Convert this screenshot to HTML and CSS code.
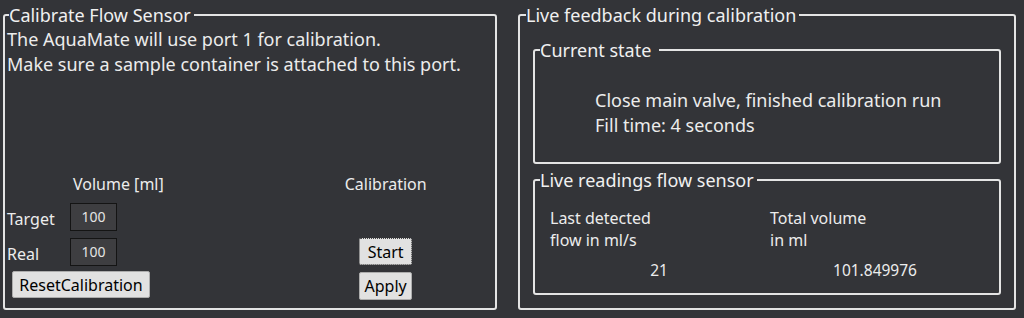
FILE: index.html
```html
<!DOCTYPE html>
<html>
<head>
<meta charset="utf-8">
<link rel="stylesheet" href="styles.css">
</head>
<body>
<div class="main">
  <fieldset class="group left">
    <legend>Calibrate Flow Sensor</legend>
    <p class="intro">The AquaMate will use port 1 for calibration.<br>Make sure a sample container is attached to this port.</p>
    <div class="calib">
      <div class="vol-col">
        <div class="col-head vol-head">Volume [ml]</div>
        <div class="row"><span class="lbl">Target</span><span class="field">100</span></div>
        <div class="row"><span class="lbl">Real</span><span class="field">100</span></div>
        <button class="btn reset">ResetCalibration</button>
      </div>
      <div class="cal-col">
        <div class="col-head">Calibration</div>
        <button class="btn start">Start</button>
        <button class="btn apply">Apply</button>
      </div>
    </div>
  </fieldset>
  <fieldset class="group right">
    <legend>Live feedback during calibration</legend>
    <fieldset class="group state">
      <legend>Current state&nbsp;</legend>
      <p class="state-text">Close main valve, finished calibration run<br>Fill time: 4 seconds</p>
    </fieldset>
    <fieldset class="group readings">
      <legend>Live readings flow sensor</legend>
      <div class="read-grid">
        <div class="read-col">
          <div class="read-lbl">Last detected<br>flow in ml/s</div>
          <div class="read-val">21</div>
        </div>
        <div class="read-col">
          <div class="read-lbl">Total volume<br>in ml</div>
          <div class="read-val">101.849976</div>
        </div>
      </div>
    </fieldset>
  </fieldset>
</div>
</body>
</html>
```
FILE: styles.css
```css
html, body {
  margin: 0;
  padding: 0;
  background: #333438;
  height: 318px;
  overflow: hidden;
}
body {
  font-family: "Noto Sans", "Open Sans", sans-serif;
  font-size: 16px;
  color: #ececec;
}
.main {
  display: flex;
  padding: 5px 0 0 3px;
  gap: 21px;
}
.group {
  margin: 0;
  border: 2px solid #e4e4e4;
  border-radius: 3px;
  padding: 0;
  min-width: 0;
}
.group > legend {
  padding: 0 3px 0 0;
  margin-left: 2px;
  font-size: 18px;
  line-height: 20px;
  color: #f0f0f0;
}
.left {
  width: 494px;
  height: 305px;
  box-sizing: border-box;
  padding: 0 2px;
}
.intro {
  margin: 2px 0 0 0;
  font-size: 18px;
  line-height: 25px;
}
.calib {
  display: flex;
  margin-top: 96px;
}
.vol-col {
  width: 273px;
}
.col-head {
  height: 22px;
  line-height: 22px;
  font-size: 16px;
}
.vol-head {
  padding-left: 66px;
}
.row {
  display: flex;
  align-items: center;
  height: 28px;
  margin-top: 7px;
}
.vol-head + .row {
  margin-top: 8px;
}
.lbl {
  width: 63px;
  font-size: 16px;
  padding-top: 3px;
}
.field {
  width: 47px;
  height: 28px;
  box-sizing: border-box;
  background: #3e3e41;
  border: 1px solid #141414;
  color: #e4e4e4;
  font-size: 14px;
  line-height: 26px;
  text-align: center;
}
.btn {
  font-family: inherit;
  font-size: 16px;
  color: #000;
  background: #e1e1e1;
  border: 1px solid #adadad;
  border-radius: 2px;
  padding: 0;
  height: 27px;
  line-height: 24px;
}
.reset {
  margin: 5px 0 0 5px;
  width: 138px;
}
.cal-col {
  width: 216px;
  display: flex;
  flex-direction: column;
  align-items: center;
}
.start {
  margin-top: 43px;
  width: 53px;
  border: 1px dotted #444;
}
.apply {
  margin-top: 7px;
  width: 53px;
  height: 28px;
}
.right {
  width: 498px;
  height: 305px;
  box-sizing: border-box;
  padding: 0 13px;
}
.right > legend {
  margin-left: -7px;
}
.state {
  margin-top: 15px;
  height: 124px;
  box-sizing: border-box;
  padding: 0 0 0 60px;
}
.state > legend {
  margin-left: -55px;
}
.state-text {
  margin: 28px 0 0 0;
  font-size: 18px;
  line-height: 25px;
}
.readings {
  margin-top: 6px;
  height: 125px;
  box-sizing: border-box;
  padding: 0 15px;
}
.readings > legend {
  margin-left: -10px;
}
.read-grid {
  display: grid;
  grid-template-columns: 220px 212px;
  margin-top: 17px;
}
.read-lbl {
  font-size: 16px;
  line-height: 22px;
}
.read-val {
  text-align: center;
  font-size: 15.5px;
  line-height: 22px;
  margin-top: 8px;
  padding-right: 2px;
}
```
